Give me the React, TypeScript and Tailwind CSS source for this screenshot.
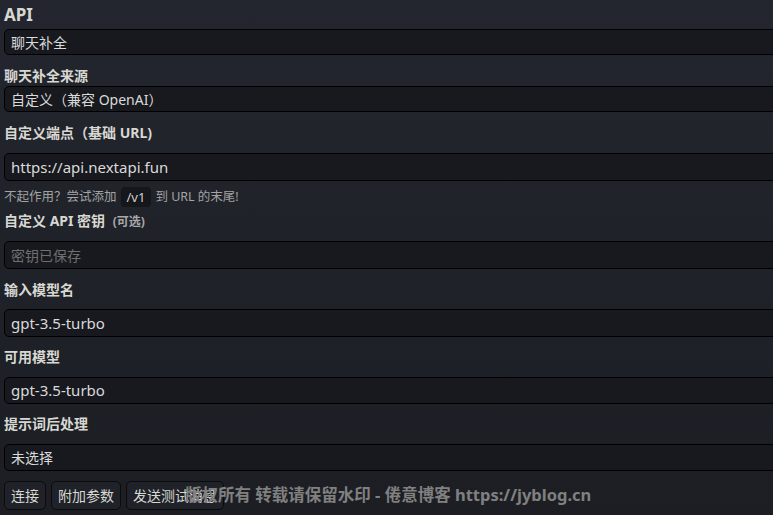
import React from "react";

const font = { fontFamily: '"Noto Sans", "Noto Sans CJK SC", sans-serif' };

function Label({ children, cls }: { children: React.ReactNode; cls: string }) {
  return (
    <div className={`${cls} shrink-0 text-[14px] font-bold leading-[20px] text-[#d8d8d2]`}>{children}</div>
  );
}

function Field({ children, cls, placeholder }: { children?: React.ReactNode; cls: string; placeholder?: boolean }) {
  return (
    <div
      className={`${cls} shrink-0 w-[800px] rounded-[5px] border border-black bg-[#17191e] pl-[6px] flex items-center ${
        placeholder ? "text-[#6f6f6f]" : "text-[#dadada]"
      }`}
    >
      {children}
    </div>
  );
}

export default function App() {
  return (
    <div
      className="relative w-[773px] h-[515px] overflow-hidden bg-gradient-to-b from-[#23262e] to-[#1c1e24]"
      style={font}
    >
      <div className="flex flex-col pl-[4px]">
        <div className="h-[29px] pt-[4px] shrink-0 text-[17px] font-bold leading-[22px] text-[#d8d8d2]">API</div>
        <Field cls="h-[26px] text-[14px]">聊天补全</Field>
        <Label cls="h-[31px] pt-[11px]">聊天补全来源</Label>
        <Field cls="h-[26px] text-[14px]">自定义（兼容 OpenAI）</Field>
        <Label cls="h-[41px] pt-[11px]">自定义端点（基础 URL)</Label>
        <Field cls="h-[28px] text-[15px]">https://api.nextapi.fun</Field>
        <div className="h-[28px] shrink-0 pt-[6px] flex items-start text-[12.5px] text-[#a3a3a3]">
          <span className="leading-[20px]">不起作用？尝试添加</span>
          <span className="mx-[4px] h-[20px] px-[6px] rounded-[4px] bg-[#15171b] text-[#cfcfcf] leading-[20px] text-[13px]">
            /v1
          </span>
          <span className="leading-[20px]">到 URL 的末尾!</span>
        </div>
        <Label cls="h-[32px] pt-[2px]">
          自定义 API 密钥 <span className="ml-[4px] text-[12px] text-[#a8a8a8]">(可选)</span>
        </Label>
        <Field cls="h-[28px] text-[14px]" placeholder>
          密钥已保存
        </Field>
        <Label cls="h-[40px] pt-[11px]">输入模型名</Label>
        <Field cls="h-[28px] text-[15px]">gpt-3.5-turbo</Field>
        <Label cls="h-[40px] pt-[10px]">可用模型</Label>
        <Field cls="h-[27px] text-[15px]">gpt-3.5-turbo</Field>
        <Label cls="h-[40px] pt-[10px]">提示词后处理</Label>
        <Field cls="h-[27px] text-[14px]">未选择</Field>
        <div className="mt-[10px] flex gap-[5px]">
          {["连接", "附加参数", "发送测试消息"].map((t) => (
            <button
              key={t}
              className="h-[29px] px-[6px] rounded-[5px] border border-[#0b0b0c] bg-[#1f2228] text-[14px] text-[#d8d8d2] leading-none"
            >
              {t}
            </button>
          ))}
        </div>
      </div>
      <div className="absolute left-[185px] top-[484px] text-[16.5px] font-bold text-[#808080] whitespace-nowrap leading-[22px]">
        版权所有 转载请保留水印 - 倦意博客 https://jyblog.cn
      </div>
    </div>
  );
}
